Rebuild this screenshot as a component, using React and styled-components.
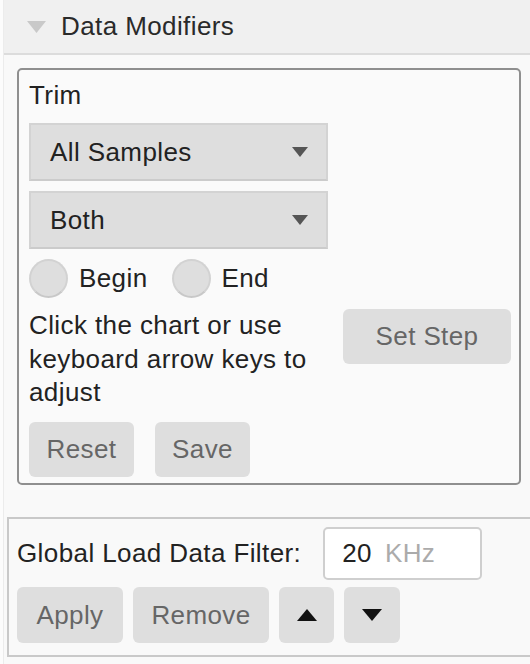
import React from "react";
import styled, { createGlobalStyle } from "styled-components";

const Global = createGlobalStyle`
  html, body {
    margin: 0;
    padding: 0;
    background: #fcfcfc;
  }
  body {
    font-family: "Liberation Sans", Arial, sans-serif;
    font-size: 26px;
    letter-spacing: 0.4px;
    color: #222;
  }
`;

const Wrap = styled.div`
  margin-left: 3px;
  border-left: 1px solid #ececec;
  background: #f9f9f9;
  height: 664px;
  overflow: hidden;
`;

const Header = styled.div`
  height: 53px;
  display: flex;
  align-items: center;
  gap: 15px;
  padding-left: 23px;
  background: #f0f0f0;
  border-bottom: 2px solid #dcdcdc;
  color: #2a2a2a;
`;

const Panel = styled.div`
  margin: 13px 0 0 13px;
  width: 490px;
  height: 403px;
  border: 2px solid #8f8f8f;
  border-radius: 5px;
  background: #fafafa;
  padding: 10px 0 0 10px;
  box-sizing: content-box;
  display: flex;
  flex-direction: column;
`;

const Label = styled.div`
  line-height: 30px;
  margin-bottom: 13px;
`;

const Select = styled.div`
  width: 299px;
  height: 58px;
  box-sizing: border-box;
  display: flex;
  align-items: center;
  justify-content: space-between;
  padding: 0 18px 0 19px;
  margin-bottom: 10px;
  background: #dedede;
  border: 2px solid #d3d3d3;
  border-bottom-color: #cbcbcb;
`;

const RadioRow = styled.div`
  display: flex;
  align-items: center;
  height: 39px;
  margin-bottom: 11px;
`;

const Radio = styled.span`
  width: 39px;
  height: 39px;
  box-sizing: border-box;
  border-radius: 50%;
  background: #dedede;
  border: 2px solid #d2d2d2;
  border-bottom-color: #c8c8c8;
  margin-right: 11px;
`;

const RadioLabel = styled.span`
  margin-right: 24px;
`;

const HelpRow = styled.div`
  display: flex;
  justify-content: space-between;
  padding-right: 8px;
  margin-bottom: 12px;
`;

const Help = styled.div`
  line-height: 33.5px;
`;

const Button = styled.button`
  font: inherit;
  letter-spacing: inherit;
  color: #666;
  background: #dedede;
  border: none;
  border-radius: 6px;
  height: ${(p) => p.$h || 55}px;
  width: ${(p) => p.$w}px;
  padding: 0;
  display: flex;
  align-items: center;
  justify-content: center;
`;

const ButtonRow = styled.div`
  display: flex;
  gap: ${(p) => p.$gap || 10}px;
`;

const FilterBox = styled.div`
  margin: 32px 0 0 3px;
  width: 580px;
  height: 128px;
  border: 2px solid #c9c9c9;
  background: #f9f9f9;
  padding: 8px 0 0 8px;
  box-sizing: content-box;
`;

const FilterRow = styled.div`
  display: flex;
  align-items: center;
  gap: 22px;
  margin-bottom: 7px;
`;

const Input = styled.div`
  width: 159px;
  height: 53px;
  box-sizing: border-box;
  border: 2px solid #cfcfcf;
  border-radius: 5px;
  background: #fff;
  display: flex;
  align-items: center;
  padding-left: 17px;
  gap: 13px;
`;

const Unit = styled.span`
  color: #ababab;
`;

const Tri = ({ up, color = "#111", w = 20, h = 12 }) => (
  <svg width={w} height={h} viewBox={`0 0 ${w} ${h}`}>
    <polygon
      points={up ? `0,${h} ${w / 2},0 ${w},${h}` : `0,0 ${w},0 ${w / 2},${h}`}
      fill={color}
    />
  </svg>
);

export default function App() {
  return (
    <>
      <Global />
      <Wrap>
        <Header>
          <Tri color="#c9c9c9" w={19} h={12} />
          <span>Data Modifiers</span>
        </Header>
        <Panel>
          <Label>Trim</Label>
          <Select>
            <span>All Samples</span>
            <Tri color="#555" w={16} h={10} />
          </Select>
          <Select>
            <span>Both</span>
            <Tri color="#555" w={16} h={10} />
          </Select>
          <RadioRow>
            <Radio />
            <RadioLabel>Begin</RadioLabel>
            <Radio />
            <RadioLabel>End</RadioLabel>
          </RadioRow>
          <HelpRow>
            <Help>
              Click the chart or use
              <br />
              keyboard arrow keys to
              <br />
              adjust
            </Help>
            <Button $w={168}>Set Step</Button>
          </HelpRow>
          <ButtonRow $gap={21}>
            <Button $w={105}>Reset</Button>
            <Button $w={95}>Save</Button>
          </ButtonRow>
        </Panel>
        <FilterBox>
          <FilterRow>
            <span>Global Load Data Filter:</span>
            <Input>
              <span>20</span>
              <Unit>KHz</Unit>
            </Input>
          </FilterRow>
          <ButtonRow>
            <Button $h={56} $w={106}>Apply</Button>
            <Button $h={56} $w={136}>Remove</Button>
            <Button $h={56} $w={55}>
              <Tri up />
            </Button>
            <Button $h={56} $w={56}>
              <Tri />
            </Button>
          </ButtonRow>
        </FilterBox>
      </Wrap>
    </>
  );
}
